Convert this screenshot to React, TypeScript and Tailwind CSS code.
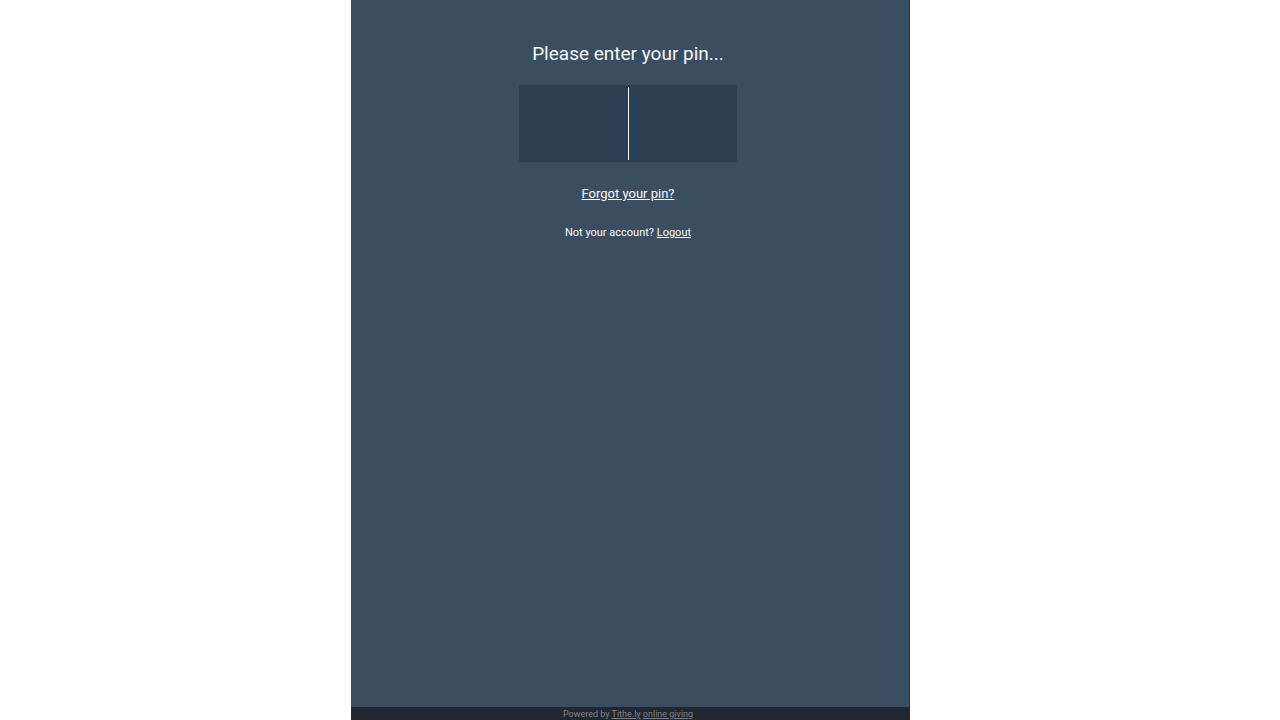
import { useState } from "react";

export default function App() {
  const [pin, setPin] = useState("");

  return (
    <div className="flex min-h-screen justify-center bg-white pr-[19px] font-[Roboto,sans-serif]">
      <div className="flex w-full max-w-[559px] flex-col border-r border-[#242e3b] bg-[#3b4d61] text-center text-[#f5f9fc]">
        <main className="flex flex-1 flex-col items-center pt-9 pr-1">
          <label htmlFor="pin" className="text-[19px] leading-9">
            Please enter your pin...
          </label>
          <div className="relative mt-[13px] w-full max-w-[218px]">
            <input
              id="pin"
              type="password"
              inputMode="numeric"
              maxLength={4}
              value={pin}
              onChange={(event) => setPin(event.target.value)}
              className="block h-[77px] w-full rounded-xs bg-[#2c3e52] text-center text-6xl caret-transparent outline-none"
            />
            {pin === "" && (
              <span
                aria-hidden="true"
                className="pointer-events-none absolute inset-y-0.5 left-1/2 w-px bg-[#f5f9fc]"
              />
            )}
          </div>
          <a href="#forgot" className="mt-5 text-[13px] leading-6 underline">
            Forgot your pin?
          </a>
          <p className="mt-[17px] text-[11px] leading-5">
            Not your account?{" "}
            <a href="#logout" className="underline">
              Logout
            </a>
          </p>
        </main>
        <footer className="bg-[#1f2832] pt-px pr-1 text-[9px] leading-3 text-[#7c828a]">
          Powered by{" "}
          <a href="#tithely" className="underline">
            Tithe.ly
          </a>{" "}
          <a href="#giving" className="underline">
            online giving
          </a>
        </footer>
      </div>
    </div>
  );
}
